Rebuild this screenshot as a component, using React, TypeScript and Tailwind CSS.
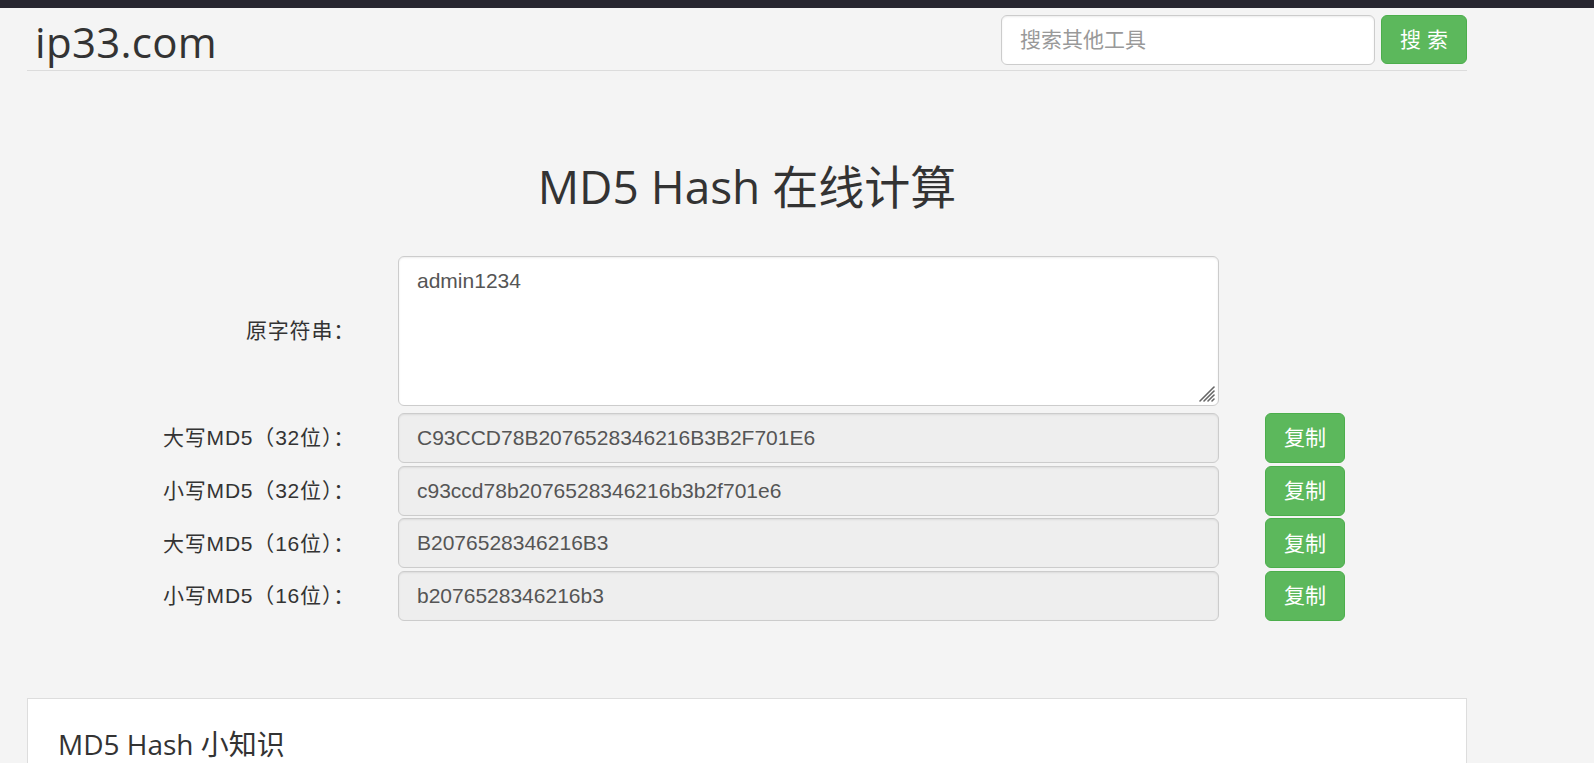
const rows = [
  { label: '大写MD5（32位）：', value: 'C93CCD78B2076528346216B3B2F701E6' },
  { label: '小写MD5（32位）：', value: 'c93ccd78b2076528346216b3b2f701e6' },
  { label: '大写MD5（16位）：', value: 'B2076528346216B3' },
  { label: '小写MD5（16位）：', value: 'b2076528346216b3' },
];

export default function App() {
  return (
    <div className="min-h-screen bg-[#f4f4f4] font-['Liberation_Sans','Noto_Sans_CJK_SC',sans-serif] text-[#333]">
      <div className="h-2 bg-[#272630]" />

      <div className="ml-[27px] w-[1440px]">
        {/* header */}
        <header className="flex h-[63px] items-start justify-between border-b border-[#dcdcdc]">
          <a className="ml-[8px] mt-[13px] font-['Open_Sans','Noto_Sans_CJK_SC',sans-serif] text-[42px] leading-none tracking-[0.3px] text-[#333]">
            ip33.com
          </a>
          <div className="mt-[7px] flex gap-[6px]">
            <input
              placeholder="搜索其他工具"
              className="h-[50px] w-[374px] rounded-[6px] border border-[#ccc] bg-white px-[18px] text-[21px] text-[#555] shadow-[inset_0_1px_2px_rgba(0,0,0,0.08)] outline-none placeholder:text-[#999]"
            />
            <button className="h-[49px] w-[86px] rounded-[6px] border border-[#4cae4c] bg-[#5cb85c] text-[21px] text-white">
              搜 索
            </button>
          </div>
        </header>

        <h2 className="mt-[92px] text-center font-['Open_Sans','Noto_Sans_CJK_SC',sans-serif] text-[46px] leading-none font-normal">
          MD5 Hash 在线计算
        </h2>

        {/* form */}
        <div className="mt-[47px] flex items-center">
          <label className="w-[328px] text-right text-[21px] tracking-[0.8px]">原字符串：</label>
          <div className="relative ml-[43px]">
            <textarea
              readOnly
              defaultValue="admin1234"
              className="block h-[150px] w-[821px] resize-none rounded-[6px] border border-[#ccc] bg-white px-[18px] py-[9px] text-[21px] leading-[30px] text-[#555] shadow-[inset_0_1px_2px_rgba(0,0,0,0.08)] outline-none"
            />
            <svg className="absolute bottom-[3px] right-[3px]" width="20" height="20" viewBox="0 0 20 20">
              <g stroke="#666" strokeWidth="1.6" strokeLinecap="round">
                <line x1="18" y1="4" x2="4" y2="18" />
                <line x1="18" y1="8" x2="8" y2="18" />
                <line x1="18" y1="12" x2="12" y2="18" />
                <line x1="18" y1="16" x2="16" y2="18" />
              </g>
            </svg>
          </div>
        </div>

        <div className="mt-[7px] flex flex-col gap-[2.67px]">
          {rows.map((row) => (
            <div key={row.label} className="flex items-center">
              <label className="w-[328px] text-right text-[21px] tracking-[0.8px]">{row.label}</label>
              <input
                readOnly
                value={row.value}
                className="ml-[43px] h-[50px] w-[821px] rounded-[6px] border border-[#ccc] bg-[#eee] px-[18px] text-[21px] text-[#555] shadow-[inset_0_1px_2px_rgba(0,0,0,0.08)] outline-none"
              />
              <button className="ml-[46px] h-[50px] w-[80px] rounded-[6px] border border-[#4cae4c] bg-[#5cb85c] text-[21px] text-white">
                复制
              </button>
            </div>
          ))}
        </div>

        {/* info card */}
        <div className="mt-[77px] border border-[#ddd] bg-white px-[30px] pb-[40px] pt-[31px]">
          <h3 className="font-['Open_Sans','Noto_Sans_CJK_SC',sans-serif] text-[28px] leading-none font-normal">
            MD5 Hash 小知识
          </h3>
        </div>
      </div>
    </div>
  );
}
